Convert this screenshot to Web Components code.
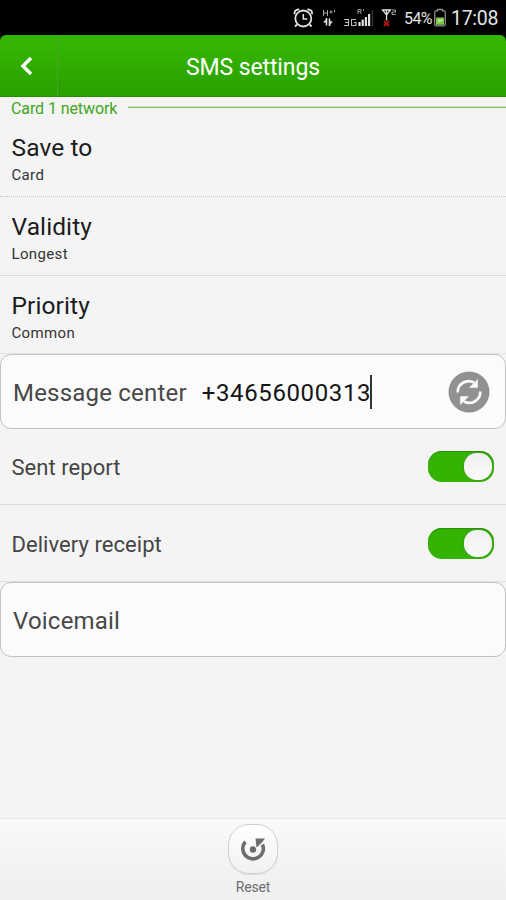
<!DOCTYPE html>
<html lang="en">
<head>
<meta charset="utf-8">
<title>SMS settings</title>
<style>
html,body{margin:0;height:100%;background:#000}
body{font-family:Roboto,"Liberation Sans",sans-serif;overflow:hidden}
</style>
</head>
<body>
<sms-app></sms-app>
<script>
const define = (name, css, html) => customElements.define(name, class extends HTMLElement {
  constructor() {
    super();
    this.attachShadow({mode: 'open'}).innerHTML = `<style>*{box-sizing:border-box}${css}</style>${html}`;
  }
});

define('status-bar', `
:host{display:block;height:35px;background:#000;color:#e4e4e4}
.bar{display:flex;align-items:center;height:35px;padding-left:292px}
svg{display:block;flex:none}
.pct{font-size:16px;line-height:20px;letter-spacing:-.6px;margin-left:4px;width:30px;white-space:nowrap;padding-top:2px}
.time{font-size:19.5px;line-height:24px;margin-left:5px;white-space:nowrap;letter-spacing:-.3px;padding-top:2px}`,
`<div class="bar">
<svg width="108" height="35" fill="none" stroke="#e0e0e0">
<circle cx="11.3" cy="18.5" r="8" stroke-width="1.8"/><path d="M11.3 14v5h4" stroke-width="1.5"/><path d="M2.2 14.2l1-3.5 4-1.5M20.4 14.2l-1-3.5-4-1.5M5 24.5l-2 2M17.6 24.5l2 2" stroke-width="1.8"/>
<path d="M31.5 10v6M35.500 10v6M31.500 13h4M37.500 12h3M39 10.500v3M42.500 10v2" stroke-width="1" stroke="#aaa"/>
<path d="M34.500 18v7.500M31.700 22h2.800M37.500 18.500v7.500M37.500 22h2.800" stroke-width="1.600"/><path d="M34.500 18.500l-2.500 3h2.500zM37.500 25.500l2.500-3h-2.500z" fill="#e0e0e0" stroke="none"/>
<path d="M52 19.500h4.500v6H52M53 22.500h3.500M64 19.500h-4.500v6H64v-3h-2" stroke-width="1.100" stroke="#bbb"/>
<path d="M67.500 26v-4M70.700 26v-6.500M73.900 26v-9M77.100 26v-12" stroke-width="2.200"/><path d="M80.500 26V10.500" stroke="#333" stroke-width="1.500"/>
<path d="M66 14V9.500h3v2.200h-3M68 11.700l1.500 2.300M71.500 9v2" stroke="#999"/>
<path d="M90.500 10h8l-4 5zM94.500 10v10.500" stroke-width="1.300"/><path d="M100 10h3.500v2.200H100v2.300h3.500" stroke="#aaa"/>
<path d="M92 21l5 5M97 21l-5 5" stroke="#b81414" stroke-width="2"/>
</svg>
<span class="pct">54%</span>
<svg width="12" height="35" fill="none"><path d="M3.500 10.800V9.500h5v1.300h1.500q1.300 0 1.300 1.500v12q0 1.500-1.300 1.500H2Q.7 25.800.7 24.300v-12q0-1.500 1.300-1.500z" stroke="#8d8d8d" stroke-width="1.300"/><path d="M2 17.500h8v7.300H2z" fill="#7ec94d"/><path d="M4.500 19h1v1h2v-1h1v2h-2v1h-2z" fill="#c7ecae"/></svg>
<span class="time">17:08</span></div>`);

define('title-bar', `
:host{display:block;height:62px;background:#000}
header{display:grid;grid-template-columns:57px 1fr 57px;height:62px;border-radius:6px 6px 0 0;background:linear-gradient(#35b503 0,#34b302 25%,#2ba100 90%);border-bottom:1px solid #249000}
.back{display:flex;align-items:center;justify-content:center;width:58px;border-right:1px solid #43a824;padding-right:5px}
h1{margin:0;font-weight:400;font-size:23px;line-height:30px;padding-top:17.5px;text-align:center;color:#fff;letter-spacing:-.1px}`,
`<header><div class="back"><svg width="16" height="22" viewBox="0 0 16 22" fill="none" stroke="#fff" stroke-width="3.400"><path d="M13 3L5 11l8 8"/></svg></div><h1><slot></slot></h1></header>`);

define('section-label', `
:host{display:flex;align-items:center;height:21px;padding-left:11px;color:#3fa720;font-size:16px;line-height:21px;letter-spacing:-.09px;white-space:nowrap}
i{flex:1;height:2px;margin:-2px 0 0 11px;border-top:1px solid #ccebbf;background:#79c258}
span{padding-top:1px}`,
`<span><slot></slot></span><i></i>`);

define('setting-row', `
:host{display:block;height:79px;padding:15px 12px 0 11.500px;border-bottom:1px solid #dadada;color:#1c1c1c}
:host([dotted]){border-bottom-style:dotted;border-bottom-color:#c4c4c4}
:host([last]){border-bottom-color:#e3e3e3;height:78px}
.t{font-size:24.500px;line-height:30px;letter-spacing:.1px}
.s{font-size:15px;line-height:20px;margin-top:2px;letter-spacing:.35px;color:#333}`,
`<div class="t"><slot></slot></div><div class="s"><slot name="value"></slot></div>`);

define('text-field', `
:host{display:flex;align-items:center;height:75px;border:1px solid #c2c4c1;border-radius:11px;background:#fbfbfb;padding:0 15px 0 12px;font-size:24px;line-height:30px;letter-spacing:.2px;color:#484848;white-space:nowrap}
span{padding-top:2px}
.v{color:#151515;flex:1;display:flex;align-items:center;padding:2px 0 0 15px;letter-spacing:.62px}`,
`<span><slot></slot></span><span class="v"><slot name="value"></slot></span><slot name="action"></slot>`);

define('text-caret', `:host{display:block;width:2px;height:34px;background:#333;margin:-2px 0 0 -1px}`, '');

define('refresh-button', `:host{display:block;width:42px;height:42px}svg{display:block}`,
`<svg width="42" height="42" viewBox="0 0 42 42"><circle cx="21" cy="21" r="20.500" fill="#919191"/><g fill="none" stroke="#fafafa" stroke-width="2.700"><path d="M9.700 21.500A11 11 0 0 1 26 11.500"/><path d="M32.300 20.500A11 11 0 0 1 16 30.500"/></g><path d="M29.800 8v8.800h-8.800zM12.200 34v-8.800h8.800z" fill="#fafafa"/></svg>`);

define('toggle-switch', `
:host{display:flex;justify-content:flex-end;width:66px;height:31px;border-radius:14px;background:#34b302;box-shadow:inset 0 1px 1px #289100;padding:2px 2px}
i{width:28px;height:27px;border-radius:12.500px;background:linear-gradient(#f0f0f0,#fafafa);box-shadow:0 0 1px 1px #48863a66}`, '<i></i>');

define('switch-row', `
:host{display:flex;align-items:center;justify-content:space-between;height:76px;padding:0 12px 0 11.500px;border-bottom:1px solid #dadada;color:#454545;font-size:22px;line-height:30px;letter-spacing:.05px}
:host([last]){height:77px;border-bottom-color:#e0e0e0}
span{padding-top:3px}`,
`<span><slot></slot></span><toggle-switch></toggle-switch>`);

define('bottom-action', `
:host{display:flex;flex-direction:column;align-items:center;height:82px;padding-top:5px;border-top:1px solid #e5e5e5;background:linear-gradient(#f9f9f9,#efefef)}
.b{width:50px;height:50px;border:1px solid #d0d0d0;border-radius:21px;background:linear-gradient(#fff,#f1f1f1);box-shadow:0 1px 1px #ddd}
svg{display:block}
.l{font-size:14px;line-height:18px;margin-top:4px;color:#6e6e6e;letter-spacing:-.2px}`,
`<div class="b"><svg width="48" height="48" viewBox="0 0 48 48"><path d="M16.300 16.800A10.300 10.300 0 1 0 33.500 19.500" fill="none" stroke="#6d6d6d" stroke-width="3.600"/><path d="M26.500 13.500h9.500l-3.500 4.500-5 4.500z" fill="#6d6d6d"/><circle cx="24" cy="24.500" r="3.200" fill="#6d6d6d"/></svg></div><div class="l"><slot></slot></div>`);

define('sms-app', `
:host{display:flex;flex-direction:column;width:506px;height:900px;background:#f4f4f4;overflow:hidden}
main{flex:1}`,
`<status-bar></status-bar><title-bar>SMS settings</title-bar>
<main><section-label>Card 1 network</section-label>
<setting-row dotted>Save to<span slot="value">Card</span></setting-row>
<setting-row>Validity<span slot="value">Longest</span></setting-row>
<setting-row last>Priority<span slot="value">Common</span></setting-row>
<text-field>Message center<span slot="value">+34656000313</span><text-caret slot="value"></text-caret><refresh-button slot="action"></refresh-button></text-field>
<switch-row>Sent report</switch-row>
<switch-row last>Delivery receipt</switch-row>
<text-field>Voicemail</text-field></main>
<bottom-action>Reset</bottom-action>`);
</script>
</body>
</html>
